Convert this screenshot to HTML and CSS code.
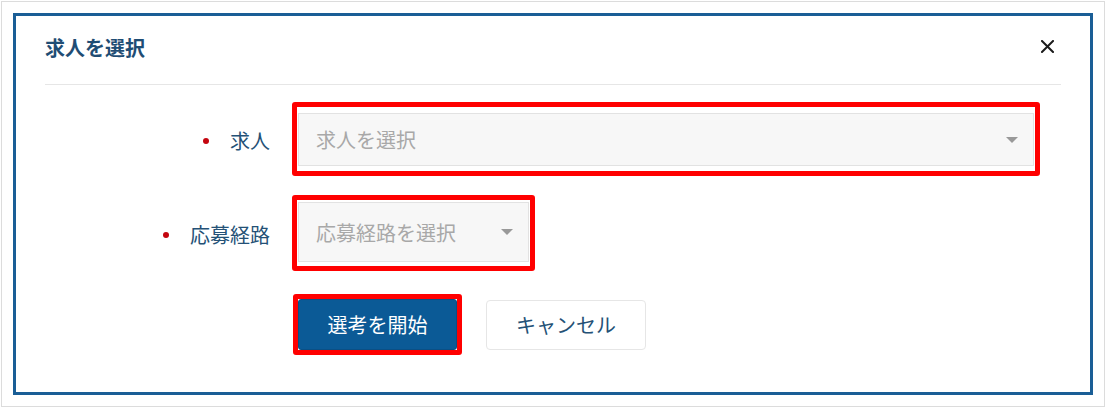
FILE: index.html
```html
<!DOCTYPE html>
<html lang="ja">
<head>
<meta charset="utf-8">
<link rel="stylesheet" href="styles.css">
</head>
<body>
<div class="page">
  <div class="frame">
    <div class="dialog">
      <div class="header">
        <span class="title">求人を選択</span>
        <svg class="close" width="13" height="13" viewBox="0 0 13 13"><path d="M1 1 L12 12 M12 1 L1 12" stroke="#1b1b1b" stroke-width="2" stroke-linecap="square"/></svg>
      </div>
      <div class="form">
        <div class="row">
          <div class="label"><span class="dot"></span>求人</div>
          <div class="mark mark-job">
            <div class="select select-job"><span>求人を選択</span><span class="caret"></span></div>
          </div>
        </div>
        <div class="row row-route">
          <div class="label"><span class="dot"></span>応募経路</div>
          <div class="mark mark-route">
            <div class="select select-route"><span>応募経路を選択</span><span class="caret"></span></div>
          </div>
        </div>
        <div class="actions">
          <div class="mark mark-btn">
            <button class="btn-primary">選考を開始</button>
          </div>
          <button class="btn-cancel">キャンセル</button>
        </div>
      </div>
    </div>
  </div>
</div>
</body>
</html>
```
FILE: styles.css
```css
* { box-sizing: border-box; }
html, body { margin: 0; padding: 0; background: #fff; }
body { font-family: "Noto Sans CJK JP", "Noto Sans", sans-serif; }
.page { padding: 1px; }
.frame {
  width: 1104px;
  height: 406px;
  border: 1px solid #dcdcdc;
  padding: 11px;
}
.dialog {
  height: 382px;
  border: 3px solid #1a5e96;
  padding: 0 29px;
}
.header {
  display: flex;
  justify-content: space-between;
  align-items: center;
  padding-top: 22px;
  padding-bottom: 26px;
  border-bottom: 1px solid #e6e6e6;
}
.title {
  font-size: 20px;
  line-height: 20px;
  font-weight: bold;
  color: #1f4d74;
}
.close { margin-right: 7px; margin-top: -4px; }
.form { padding-top: 17px; }
.row { display: flex; align-items: center; }
.row-route { margin-top: 19px; }
.label {
  width: 225px;
  margin-right: 22px;
  display: flex;
  justify-content: flex-end;
  align-items: center;
  font-size: 20px;
  line-height: 24px;
  color: #245176;
  padding-top: 4px;
}
.dot {
  width: 6px;
  height: 6px;
  border-radius: 50%;
  background: #c4050f;
  margin-right: 21px;
}
.mark { border: 5px solid #ff0000; border-radius: 3px; }
.mark-job { padding: 6px 1px 5px 1px; }
.mark-route { padding: 2px 1px 4px 1px; }
.select {
  display: flex;
  justify-content: space-between;
  align-items: center;
  background: #f7f7f7;
  border: 1px solid #e2e2e2;
  padding: 0 15px 0 17px;
  font-size: 20px;
  color: #a8a8a8;
}
.select-job { width: 736px; height: 53px; }
.select-route { width: 231px; height: 60px; }
.caret {
  width: 0;
  height: 0;
  border-left: 6px solid transparent;
  border-right: 6px solid transparent;
  border-top: 6px solid #999;
}
.actions {
  display: flex;
  align-items: center;
  margin-top: 23px;
  margin-left: 248px;
}
.mark-btn { padding: 0; }
.btn-primary {
  display: block;
  width: 159px;
  height: 51px;
  background: #0b5a96;
  border: 1px solid #0a4f85;
  border-radius: 3px;
  color: #fff;
  font-family: inherit;
  font-size: 20px;
  padding: 0;
}
.btn-cancel {
  margin-left: 24px;
  width: 160px;
  height: 50px;
  background: #fff;
  border: 1px solid #e6e6e6;
  border-radius: 4px;
  color: #245176;
  font-family: inherit;
  font-size: 20px;
  padding: 0;
}
```
